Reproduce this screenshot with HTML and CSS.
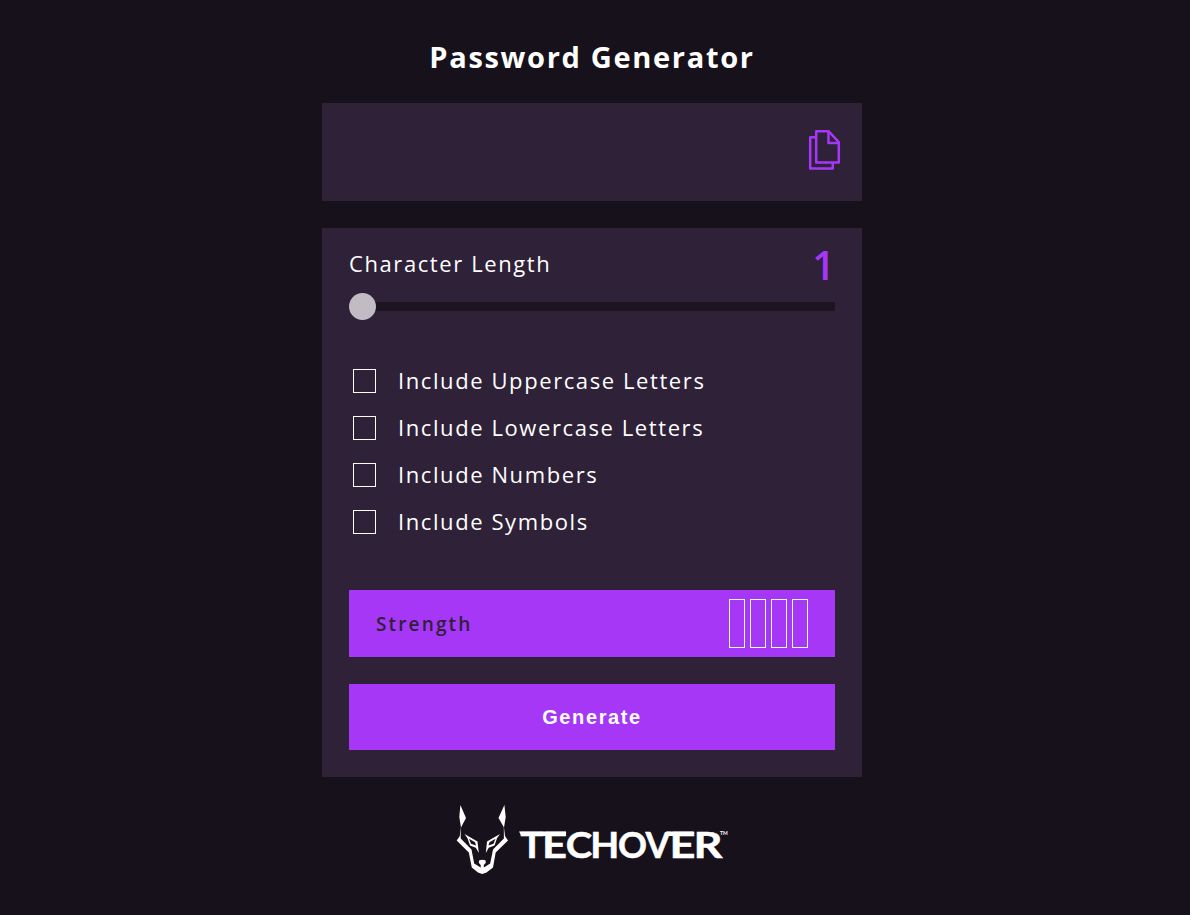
FILE: index.html
```html
<!DOCTYPE html>
<html lang="en">
<head>
<meta charset="utf-8">
<title>Password Generator</title>
<link rel="stylesheet" href="styles.css">
</head>
<body>
<main class="generator">
  <h1 class="title">Password Generator</h1>
  <section class="display">
    <button class="copy" aria-label="Copy password">
      <svg width="34" height="42" viewBox="0 0 34 42" fill="none" stroke="currentColor" stroke-width="2.5" stroke-linejoin="round">
        <path d="M8 8.2H3.2V39.6H25.8V34"/>
        <path d="M9.2 2.2H21.5L31.8 13.2V33.6H9.2Z"/>
        <path d="M21.5 2.2V14H31.8"/>
      </svg>
    </button>
  </section>
  <section class="panel">
    <div class="length"><span class="length-label">Character Length</span><span class="length-value">1</span></div>
    <div class="slider"><span class="thumb"></span></div>
    <div class="options">
      <label class="option"><span class="box"></span><span class="option-text">Include Uppercase Letters</span></label>
      <label class="option"><span class="box"></span><span class="option-text">Include Lowercase Letters</span></label>
      <label class="option"><span class="box"></span><span class="option-text">Include Numbers</span></label>
      <label class="option"><span class="box"></span><span class="option-text">Include Symbols</span></label>
    </div>
    <div class="strength"><span>Strength</span>
      <div class="bars"><i class="bar"></i><i class="bar"></i><i class="bar"></i><i class="bar"></i></div>
    </div>
    <button class="generate">Generate</button>
  </section>
  <footer class="brand">
    <svg width="272" height="72" viewBox="456 803 272 72" fill="#fff">
      <path d="M460.4 805L466 818L461 827.5L459.3 817ZM504.4 805L505.7 817L504 827.5L498.5 818Z"/>
      <path d="M460.7 826L460.7 838.5L471.5 849.5L474.2 863.5L482.2 868.5L490.2 863.5L493 849.5L503.9 838.5L503.8 826L505 836L508 840.5L495.7 852.5L493 867.5L486.5 872.5L482.2 874L478 872.5L471.8 867.5L468.8 852.5L456.7 840.5L459.8 836Z"/>
      <path fill-rule="evenodd" d="M464.5 834L477.5 841.5L478.8 853L475.8 847.8L470 845.5L467.5 838.3ZM469 838.8L471 843.8L476 845.5L475 842.2Z"/>
      <path fill-rule="evenodd" d="M500 834L487 841.5L485.8 853L488.7 847.8L494.5 845.5L497 838.3ZM495.5 838.8L493.5 843.8L488.5 845.5L489.5 842.2Z"/>
      <path d="M479.2 860.3Q482.2 859.2 485.5 860.3L485.8 862.7L483.8 865L484 870H480.5L480.7 865L478.8 862.7Z"/>
      <path d="M519 831.6H566V836H521.5Z"/>
      <g class="wordmark">
        <text x="520.5" y="858" textLength="23" lengthAdjust="spacingAndGlyphs">T</text>
        <text x="542" y="858" textLength="25" lengthAdjust="spacingAndGlyphs">E</text>
        <text x="565.8" y="858" textLength="26.5" lengthAdjust="spacingAndGlyphs">C</text>
        <text x="590.3" y="858" textLength="29" lengthAdjust="spacingAndGlyphs">H</text>
        <text x="618" y="858" textLength="29" lengthAdjust="spacingAndGlyphs">O</text>
        <text x="645.5" y="858" textLength="24.5" lengthAdjust="spacingAndGlyphs">V</text>
        <text x="669.5" y="858" textLength="26" lengthAdjust="spacingAndGlyphs">E</text>
        <text x="693.5" y="858" textLength="29" lengthAdjust="spacingAndGlyphs">R</text>
      </g>
      <path d="M666.5 831.6H693.5V836H664.5Z"/>
      <text class="tm" x="720" y="835">TM</text>
    </svg>
  </footer>
</main>
</body>
</html>
```
FILE: styles.css
```css
* { box-sizing: border-box; }
body {
  margin: 0;
  padding-right: 6px;
  min-height: 915px;
  background: #17111b;
  color: #fff;
  font-family: "Open Sans", sans-serif;
  letter-spacing: 1.59px;
}
.generator { width: 540px; margin: 0 auto; padding-top: 36px; }
.title {
  margin: 0 0 26px;
  font-size: 29px;
  line-height: 41px;
  font-weight: 700;
  text-align: center;
  letter-spacing: 1.68px;
}
.display {
  display: flex;
  align-items: center;
  justify-content: flex-end;
  height: 98px;
  padding-right: 21px;
  margin-bottom: 27px;
  background: #2e2138;
}
.copy { display: flex; padding: 0; border: 0; background: none; color: #a737f7; margin-top: -4px; }
.panel { height: 549px; padding: 18px 27px 27px; background: #2e2138; }
.length { display: flex; justify-content: space-between; height: 38px; }
.length-label { font-size: 22px; line-height: 34px; }
.length-value { font-size: 40px; line-height: 38px; font-weight: 600; color: #a737f7; letter-spacing: 0; }
.slider { display: flex; align-items: center; height: 9px; margin-top: 18px; background: #1c151f; }
.thumb { width: 27px; height: 27px; border-radius: 50%; background: #c1bbc4; }
.options { margin-top: 46px; padding-left: 4px; }
.option { display: flex; align-items: center; gap: 22px; height: 47px; font-size: 22px; }
.option-text { padding-bottom: 2px; }
.box { width: 23px; height: 24px; border: 1px solid #fff; }
.strength {
  display: flex;
  align-items: center;
  justify-content: space-between;
  height: 67px;
  margin-top: 45px;
  padding: 0 27px;
  background: #a737f7;
  color: #2e2138;
  font-size: 19px;
  font-weight: 600;
  letter-spacing: 2.15px;
}
.bars { display: flex; gap: 5px; }
.bar { width: 16px; height: 49px; border: 1px solid #fff; }
.generate {
  display: block;
  width: 100%;
  height: 66px;
  margin-top: 27px;
  padding: 0;
  border: 0;
  background: #a737f7;
  color: #fff;
  font: 700 20px "Liberation Sans", sans-serif;
  letter-spacing: 1.62px;
}
.brand { display: flex; justify-content: center; margin-top: 26px; }
.wordmark { font: 700 36.5px "Lato", sans-serif; letter-spacing: 0; stroke: #fff; stroke-width: 0.5px; }
.tm { font: 700 5px "Lato", sans-serif; letter-spacing: 0; }
```
